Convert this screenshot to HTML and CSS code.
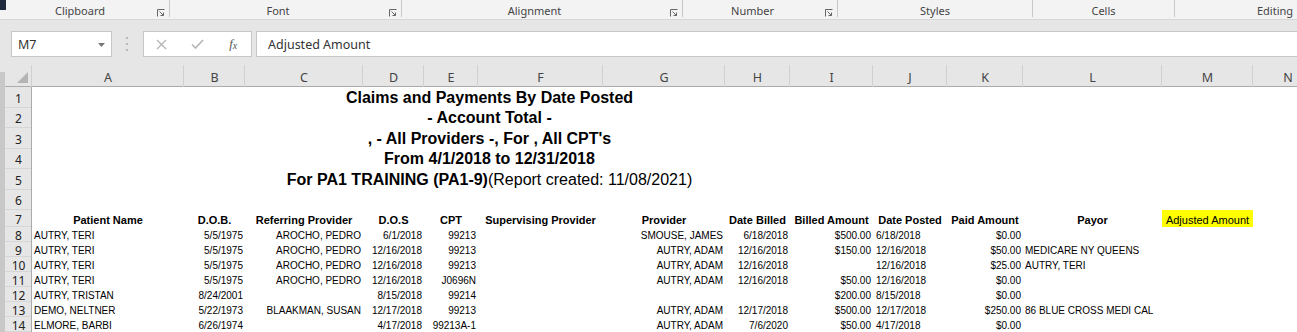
FILE: index.html
```html
<!DOCTYPE html>
<html>
<head>
    <title>Claims and Payments By Date Posted</title>
    <link rel="stylesheet" href="styles.css">
</head>
<body>
<div class="ribbon">
    <span class="window-edge"></span>
    <div class="group g-clipboard"><span class="group-name">Clipboard</span>
        <svg class="launcher" viewBox="0 0 8 8"><path d="M0.5 7.5V0.5H7.5M2.5 2.5L6.5 6.5M3.5 6.5H6.5V3.5"/></svg></div>
    <div class="group g-font"><span class="group-name">Font</span>
        <svg class="launcher" viewBox="0 0 8 8"><path d="M0.5 7.5V0.5H7.5M2.5 2.5L6.5 6.5M3.5 6.5H6.5V3.5"/></svg></div>
    <div class="group g-alignment"><span class="group-name">Alignment</span>
        <svg class="launcher" viewBox="0 0 8 8"><path d="M0.5 7.5V0.5H7.5M2.5 2.5L6.5 6.5M3.5 6.5H6.5V3.5"/></svg></div>
    <div class="group g-number"><span class="group-name">Number</span>
        <svg class="launcher" viewBox="0 0 8 8"><path d="M0.5 7.5V0.5H7.5M2.5 2.5L6.5 6.5M3.5 6.5H6.5V3.5"/></svg></div>
    <div class="group g-styles"><span class="group-name">Styles</span></div>
    <div class="group g-cells"><span class="group-name">Cells</span></div>
    <div class="group g-editing"><span class="group-name">Editing</span></div>
</div>

<div class="formula-bar">
    <div class="name-box"><span>M7</span>
        <svg class="caret" viewBox="0 0 7 4"><polygon points="0,0 7,0 3.5,4"/></svg></div>
    <div class="grip"><i></i><i></i><i></i></div>
    <div class="fx-box">
        <span><svg class="cancel" viewBox="0 0 11 11"><path d="M1 1L10 10M10 1L1 10"/></svg></span>
        <span><svg class="enter" viewBox="0 0 13 10"><path d="M1 5.5L4.5 9L12 1"/></svg></span>
        <span class="fx"><i>f</i><i class="fx-x">x</i></span>
    </div>
    <div class="formula-input">Adjusted Amount</div>
</div>

<div class="sheet">
    <div class="sheet-edge"></div>
    <table class="cells">
        <colgroup>
            <col class="c-rh"><col class="c-a"><col class="c-b"><col class="c-c"><col class="c-d">
            <col class="c-e"><col class="c-f"><col class="c-g"><col class="c-h"><col class="c-i">
            <col class="c-j"><col class="c-k"><col class="c-l"><col class="c-m"><col class="c-n">
        </colgroup>
        <tr class="row-cols">
            <th class="corner"><svg viewBox="0 0 27 22"><polygon points="23,7 23,18 12,18"/></svg></th>
            <th class="col-letter">A</th><th class="col-letter">B</th><th class="col-letter">C</th>
            <th class="col-letter">D</th><th class="col-letter">E</th><th class="col-letter">F</th>
            <th class="col-letter">G</th><th class="col-letter">H</th><th class="col-letter">I</th>
            <th class="col-letter">J</th><th class="col-letter">K</th><th class="col-letter">L</th>
            <th class="col-letter">M</th><th class="col-letter">N</th>
        </tr>
        <tr class="row-lg">
            <th class="rh">1</th>
            <td class="title" colspan="10">Claims and Payments By Date Posted</td><td colspan="4"></td>
        </tr>
        <tr class="row-md">
            <th class="rh">2</th>
            <td class="title" colspan="10">- Account Total -</td><td colspan="4"></td>
        </tr>
        <tr class="row-lg">
            <th class="rh">3</th>
            <td class="title" colspan="10">, - All Providers -, For , All CPT's</td><td colspan="4"></td>
        </tr>
        <tr class="row-md">
            <th class="rh">4</th>
            <td class="title" colspan="10">From 4/1/2018 to 12/31/2018</td><td colspan="4"></td>
        </tr>
        <tr class="row-lg">
            <th class="rh">5</th>
            <td class="title" colspan="10">For PA1 TRAINING (PA1-9)<span class="plain">(Report created: 11/08/2021)</span></td><td colspan="4"></td>
        </tr>
        <tr class="row-md">
            <th class="rh">6</th>
            <td colspan="14"></td>
        </tr>
        <tr class="row-head">
            <th class="rh">7</th>
            <td>Patient Name</td><td>D.O.B.</td><td>Referring Provider</td><td>D.O.S</td><td>CPT</td>
            <td>Supervising Provider</td><td>Provider</td><td>Date Billed</td><td>Billed Amount</td>
            <td>Date Posted</td><td>Paid Amount</td><td>Payor</td><td class="highlight">Adjusted Amount</td><td></td>
        </tr>
        <tr class="row-data">
            <th class="rh">8</th>
            <td>AUTRY, TERI</td><td class="r">5/5/1975</td><td class="r">AROCHO, PEDRO</td><td class="r">6/1/2018</td>
            <td class="r">99213</td><td></td><td class="r">SMOUSE, JAMES</td><td class="r">6/18/2018</td>
            <td class="r">$500.00</td><td class="l">6/18/2018</td><td class="r">$0.00</td><td></td><td></td><td></td>
        </tr>
        <tr class="row-data">
            <th class="rh">9</th>
            <td>AUTRY, TERI</td><td class="r">5/5/1975</td><td class="r">AROCHO, PEDRO</td><td class="r">12/16/2018</td>
            <td class="r">99213</td><td></td><td class="r">AUTRY, ADAM</td><td class="r">12/16/2018</td>
            <td class="r">$150.00</td><td class="l">12/16/2018</td><td class="r">$50.00</td><td>MEDICARE NY QUEENS</td><td></td><td></td>
        </tr>
        <tr class="row-data">
            <th class="rh">10</th>
            <td>AUTRY, TERI</td><td class="r">5/5/1975</td><td class="r">AROCHO, PEDRO</td><td class="r">12/16/2018</td>
            <td class="r">99213</td><td></td><td class="r">AUTRY, ADAM</td><td class="r">12/16/2018</td>
            <td class="r"></td><td class="l">12/16/2018</td><td class="r">$25.00</td><td>AUTRY, TERI</td><td></td><td></td>
        </tr>
        <tr class="row-data">
            <th class="rh">11</th>
            <td>AUTRY, TERI</td><td class="r">5/5/1975</td><td class="r">AROCHO, PEDRO</td><td class="r">12/16/2018</td>
            <td class="r">J0696N</td><td></td><td class="r">AUTRY, ADAM</td><td class="r">12/16/2018</td>
            <td class="r">$50.00</td><td class="l">12/16/2018</td><td class="r">$0.00</td><td></td><td></td><td></td>
        </tr>
        <tr class="row-data">
            <th class="rh">12</th>
            <td>AUTRY, TRISTAN</td><td class="r">8/24/2001</td><td class="r"></td><td class="r">8/15/2018</td>
            <td class="r">99214</td><td></td><td class="r"></td><td class="r"></td>
            <td class="r">$200.00</td><td class="l">8/15/2018</td><td class="r">$0.00</td><td></td><td></td><td></td>
        </tr>
        <tr class="row-data">
            <th class="rh">13</th>
            <td>DEMO, NELTNER</td><td class="r">5/22/1973</td><td class="r">BLAAKMAN, SUSAN</td><td class="r">12/17/2018</td>
            <td class="r">99213</td><td></td><td class="r">AUTRY, ADAM</td><td class="r">12/17/2018</td>
            <td class="r">$500.00</td><td class="l">12/17/2018</td><td class="r">$250.00</td><td>86 BLUE CROSS MEDI CAL</td><td></td><td></td>
        </tr>
        <tr class="row-data">
            <th class="rh">14</th>
            <td>ELMORE, BARBI</td><td class="r">6/26/1974</td><td class="r"></td><td class="r">4/17/2018</td>
            <td class="r">99213A-1</td><td></td><td class="r">AUTRY, ADAM</td><td class="r">7/6/2020</td>
            <td class="r">$50.00</td><td class="l">4/17/2018</td><td class="r">$0.00</td><td></td><td></td><td></td>
        </tr>
    </table>
</div>
</body>
</html>
```

FILE: styles.css
```css
body {
    margin: 0;
    width: 1297px;
    height: 332px;
    overflow: hidden;
    background-color: #fff;
    font-family: "Noto Sans", sans-serif;
}

/* ribbon group labels */
.ribbon {
    display: flex;
    height: 20px;
    box-sizing: border-box;
    background-color: #f3f3f3;
    border-bottom: 1px solid #d6d6d6;
    overflow: hidden;
}

.window-edge {
    flex: 0 0 6px;
    height: 10px;
    background-color: #1f2b3d;
}

.group {
    flex: 0 0 auto;
    display: flex;
    height: 17px;
    box-sizing: border-box;
    border-right: 1px solid #c8c8c8;
    color: #444;
    font-size: 11px;
}

.group-name {
    flex: 1;
    padding-top: 4px;
    line-height: 14px;
    text-align: center;
}

.g-clipboard { width: 164px; }
.g-font { width: 232px; }
.g-alignment { width: 281px; }
.g-number { width: 155px; }
.g-styles { width: 195px; }
.g-cells { width: 142px; }
.g-editing { width: 200px; border-right: none; }

.launcher {
    width: 8px;
    height: 8px;
    align-self: flex-end;
    margin: 0 4px 0 3px;
    fill: none;
    stroke: #666;
    stroke-width: 1;
}

/* formula bar */
.formula-bar {
    display: flex;
    height: 45px;
    box-sizing: border-box;
    padding: 11px 0 8px 11px;
    background-color: #e6e6e6;
}

.name-box {
    display: flex;
    align-items: center;
    width: 101px;
    height: 26px;
    box-sizing: border-box;
    padding-left: 6px;
    padding-top: 1px;
    background-color: #fff;
    border: 1px solid #c6c6c6;
    color: #333;
    font-size: 12.5px;
}

.caret {
    width: 7px;
    height: 4px;
    margin-left: auto;
    margin-right: 6px;
    fill: #777;
}

.grip {
    display: flex;
    flex-direction: column;
    justify-content: center;
    gap: 4px;
    width: 2px;
    margin-left: 14px;
}

.grip i {
    width: 2px;
    height: 2px;
    border-radius: 1px;
    background-color: #a8a8a8;
}

.fx-box {
    display: flex;
    width: 109px;
    height: 26px;
    box-sizing: border-box;
    margin-left: 15px;
    background-color: #fff;
    border: 1px solid #c6c6c6;
}

.fx-box span {
    display: flex;
    align-items: center;
    justify-content: center;
    width: 36px;
}

.cancel {
    width: 11px;
    height: 11px;
    fill: none;
    stroke: #b4b4b4;
    stroke-width: 1.3;
}

.enter {
    width: 13px;
    height: 10px;
    fill: none;
    stroke: #b4b4b4;
    stroke-width: 1.6;
}

.fx {
    font-family: "Liberation Serif", serif;
    color: #555;
    font-size: 13px;
}

.fx-x {
    font-size: 10px;
    margin-top: 3px;
}

.formula-input {
    flex: 1;
    height: 26px;
    box-sizing: border-box;
    margin-left: 4px;
    margin-right: -2px;
    padding-left: 11px;
    padding-top: 1px;
    background-color: #fff;
    border: 1px solid #c6c6c6;
    color: #333;
    font-size: 12.5px;
    line-height: 23px;
}

/* worksheet */
.sheet {
    display: flex;
}

.sheet-edge {
    flex: 0 0 5px;
    background: linear-gradient(#e6e6e6 7px, #c8c8c8 7px);
}

table.cells {
    flex-shrink: 0;
    width: 1318px;
    table-layout: fixed;
    border-collapse: separate;
    border-spacing: 0;
    font-family: "Liberation Sans", Arial, sans-serif;
    font-size: 10px;
    color: #000;
}

.c-rh { width: 27px; }
.c-a { width: 152px; }
.c-b { width: 61px; }
.c-c { width: 118px; }
.c-d { width: 61px; }
.c-e { width: 54px; }
.c-f { width: 125px; }
.c-g { width: 122px; }
.c-h { width: 65px; }
.c-i { width: 83px; }
.c-j { width: 74px; }
.c-k { width: 76px; }
.c-l { width: 139px; }
.c-m { width: 91px; }
.c-n { width: 70px; }

.row-cols { height: 22px; }
.row-lg { height: 21px; }
.row-md { height: 20px; }
.row-head { height: 17px; }
.row-data { height: 15px; }

.row-cols th {
    padding: 3px 0 0;
    background-color: #e6e6e6;
    box-shadow: inset -1px 0 #d0d0d0, inset 0 -1px #ababab;
    color: #444;
    font-family: "Noto Sans", sans-serif;
    font-size: 12.5px;
    font-weight: normal;
    line-height: 17px;
}

.corner svg {
    display: block;
    width: 27px;
    height: 22px;
    margin-top: -3px;
    fill: #b4b4b4;
}

.rh {
    padding: 1px 0 0;
    background-color: #e6e6e6;
    box-shadow: inset -1px 0 #ababab, inset 0 -1px #d6d6d6;
    color: #222;
    font-family: "Noto Sans", sans-serif;
    font-size: 12px;
    font-weight: normal;
    line-height: 13px;
    text-align: center;
}

td {
    padding: 0 2px;
    white-space: nowrap;
    overflow: hidden;
    line-height: 1;
    vertical-align: middle;
}

.row-data td {
    padding-top: 2px;
}

.r { text-align: right; }
.l { text-align: left; padding-left: 3px; }

td.title {
    text-align: center;
    font-size: 16px;
    font-weight: bold;
}

.title .plain {
    font-weight: normal;
}

.row-head td {
    padding-top: 3px;
    font-size: 11px;
    font-weight: bold;
    text-align: center;
}

.row-head td.highlight {
    background-color: #ffff00;
    font-weight: normal;
}
```
